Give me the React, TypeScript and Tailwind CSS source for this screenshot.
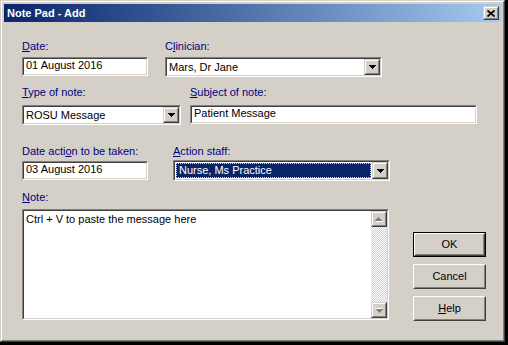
import type { ReactNode } from 'react'

const font = "font-['Liberation_Sans',Arial,sans-serif]"

function Sunken({ className = '', children }: { className?: string; children?: ReactNode }) {
  return (
    <div className={`border border-t-[#808080] border-l-[#808080] border-r-white border-b-white ${className}`}>
      <div className="flex h-full w-full border border-t-[#404040] border-l-[#404040] border-r-[#d4d0c8] border-b-[#d4d0c8] bg-white">
        {children}
      </div>
    </div>
  )
}

function Raised({ className = '', children }: { className?: string; children?: ReactNode }) {
  return (
    <div className={`border border-t-[#d4d0c8] border-l-[#d4d0c8] border-r-[#404040] border-b-[#404040] ${className}`}>
      <div className="flex h-full w-full items-center justify-center border border-t-white border-l-white border-r-[#808080] border-b-[#808080] bg-[#d4d0c8]">
        {children}
      </div>
    </div>
  )
}

function DownArrow() {
  return (
    <svg width="7" height="4" viewBox="0 0 7 4">
      <path d="M0 0h7v1h-1v1h-1v1h-1v1h-1v-1h-1v-1h-1v-1h-1z" fill="#000" />
    </svg>
  )
}

function GrayArrow({ down = false }: { down?: boolean }) {
  const d = 'M3 0h1v1h1v1h1v1h1v1h-7v-1h1v-1h1v-1h1z'
  return (
    <svg width="8" height="5" viewBox="0 0 8 5" className={down ? 'rotate-180' : ''}>
      <path d={d} fill="#fff" transform="translate(1 1)" />
      <path d={d} fill="#808080" />
    </svg>
  )
}

function Label({ children }: { children: ReactNode }) {
  return <div className="h-[13px] text-[11px] leading-[13px] text-[#000080] whitespace-nowrap">{children}</div>
}

function Field({ value, className = '' }: { value: string; className?: string }) {
  return (
    <Sunken className={className}>
      <span className="pl-[2px] text-[11px] leading-[13px] text-black whitespace-nowrap">{value}</span>
    </Sunken>
  )
}

function Combo({ value, className = '', focused = false }: { value: string; className?: string; focused?: boolean }) {
  return (
    <Sunken className={className}>
      {focused ? (
        <div className="m-[1px] flex flex-1 items-center border border-dotted border-[#e6dc9a] bg-[#0a246a] pl-[2px] text-[11px] leading-[13px] text-white whitespace-nowrap">
          {value}
        </div>
      ) : (
        <div className="flex flex-1 items-center pl-[2px] text-[11px] leading-[13px] text-black whitespace-nowrap">{value}</div>
      )}
      <Raised className="h-full w-[16px]">
        <DownArrow />
      </Raised>
    </Sunken>
  )
}

function PushButton({ children, isDefault = false }: { children: ReactNode; isDefault?: boolean }) {
  const face = (
    <div className="flex h-full w-full items-center justify-center border border-t-[#d4d0c8] border-l-[#d4d0c8] border-r-[#808080] border-b-[#808080] bg-[#d4d0c8] text-[11px] leading-[13px] text-black">
      {children}
    </div>
  )
  if (isDefault) {
    return (
      <div className="h-[25px] w-[73px] border border-black">
        <div className="h-full w-full border border-t-white border-l-white border-r-[#404040] border-b-[#404040]">{face}</div>
      </div>
    )
  }
  return (
    <div className="h-[25px] w-[73px] border border-t-white border-l-white border-r-[#404040] border-b-[#404040]">{face}</div>
  )
}

export default function App() {
  return (
    <div className={`h-[345px] w-[508px] bg-black ${font}`}>
      <div className="h-[342px] w-[505px] border border-t-[#d4d0c8] border-l-[#d4d0c8] border-r-[#404040] border-b-[#404040]">
        <div className="flex h-full flex-col border border-t-white border-l-white border-r-[#808080] border-b-[#808080] bg-[#d4d0c8] p-[2px]">
          {/* title bar */}
          <div className="flex h-[18px] items-center justify-between bg-linear-to-r from-[#0a246a] to-[#a6caf0] pl-[3px] pr-[2px]">
            <span className="pt-[1px] text-[11px] font-bold leading-[13px] text-white">Note Pad - Add</span>
            <Raised className="h-[14px] w-[16px]">
              <svg width="8" height="7" viewBox="0 0 8 7">
                <path d="M0.5 0.5l7 6M7.5 0.5l-7 6" stroke="#000" strokeWidth="1.7" />
              </svg>
            </Raised>
          </div>

          <div className="flex flex-col pl-[18px] pt-[18px]">
            {/* row 1 */}
            <div className="flex items-start">
              <div className="flex w-[143px] flex-col">
                <Label>
                  <span className="underline">D</span>ate:
                </Label>
                <Field value="01 August 2016" className="mt-[4px] h-[19px] w-[126px]" />
              </div>
              <div className="flex flex-col">
                <Label>
                  C<span className="underline">l</span>inician:
                </Label>
                <Combo value="Mars, Dr Jane" className="mt-[4px] h-[20px] w-[217px]" />
              </div>
            </div>

            {/* row 2 */}
            <div className="mt-[9px] flex items-start">
              <div className="flex w-[168px] flex-col">
                <Label>
                  <span className="underline">T</span>ype of note:
                </Label>
                <Combo value="ROSU Message" className="mt-[6px] h-[20px] w-[159px]" />
              </div>
              <div className="flex flex-col">
                <Label>
                  <span className="underline">S</span>ubject of note:
                </Label>
                <Field value="Patient Message" className="mt-[6px] h-[19px] w-[287px]" />
              </div>
            </div>

            {/* row 3 */}
            <div className="mt-[20px] flex items-start">
              <div className="flex w-[151px] flex-col">
                <Label>
                  Date acti<span className="underline">o</span>n to be taken:
                </Label>
                <Field value="03 August 2016" className="mt-[3px] h-[19px] w-[126px]" />
              </div>
              <div className="flex flex-col">
                <Label>
                  <span className="underline">A</span>ction staff:
                </Label>
                <Combo value="Nurse, Ms Practice" focused className="mt-[2px] h-[21px] w-[217px]" />
              </div>
            </div>

            {/* note + buttons */}
            <div className="mt-[10px] flex items-start">
              <div className="flex w-[367px] flex-col">
                <Label>
                  <span className="underline">N</span>ote:
                </Label>
                <Sunken className="mt-[5px] h-[111px] w-[367px]">
                  <div className="flex-1 pl-[2px] pt-[2px] text-[11px] leading-[13px] text-black">
                    Ctrl + V to paste the message here
                  </div>
                  <div className="flex w-[16px] flex-col">
                    <Raised className="h-[16px] w-[16px]">
                      <GrayArrow />
                    </Raised>
                    <div className="flex-1 bg-[repeating-conic-gradient(#d4d0c8_0%_25%,#ffffff_0%_50%)] bg-[length:2px_2px]" />
                    <Raised className="h-[16px] w-[16px]">
                      <GrayArrow down />
                    </Raised>
                  </div>
                </Sunken>
              </div>
              <div className="ml-[24px] mt-[41px] flex flex-col gap-[7px]">
                <PushButton isDefault>OK</PushButton>
                <PushButton>Cancel</PushButton>
                <PushButton>
                  <span>
                    <span className="underline">H</span>elp
                  </span>
                </PushButton>
              </div>
            </div>
          </div>
        </div>
      </div>
    </div>
  )
}
